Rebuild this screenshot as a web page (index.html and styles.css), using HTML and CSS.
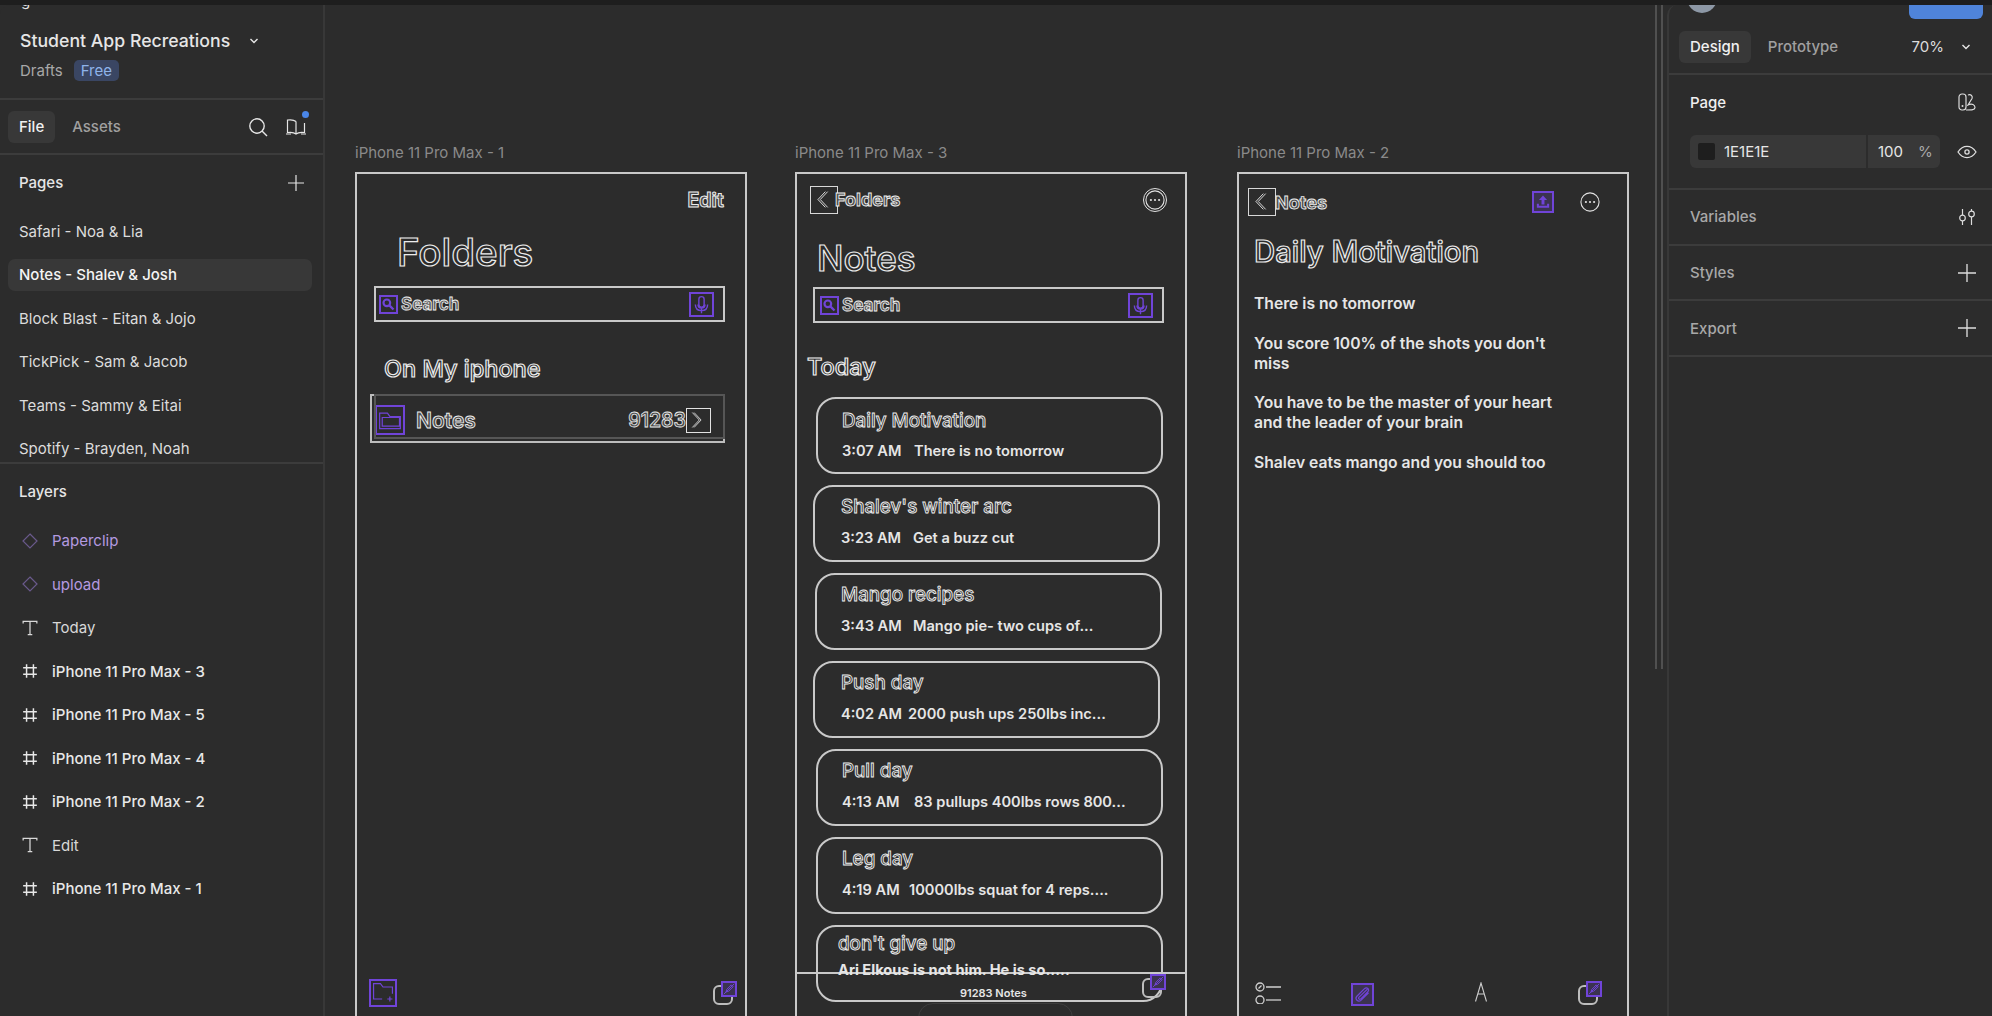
FILE: index.html
```html
<!DOCTYPE html>
<html lang="en">
<head>
  <meta charset="UTF-8" />
  <title>Student App Recreations</title>
  <link rel="stylesheet" href="styles.css">
</head>
<body>
  <svg class="sprite" xmlns="http://www.w3.org/2000/svg">
    <symbol id="i-hash" viewBox="0 0 14 14"><path d="M4 1v12M10 1v12M1 4.2h12M1 9.8h12" fill="none" stroke="currentColor" stroke-width="1.3"/></symbol>
    <symbol id="i-text" viewBox="0 0 14 14"><path d="M1 3V1.2h12V3M7 1.2v11.6M5 12.8h4" fill="none" stroke="currentColor" stroke-width="1.1"/></symbol>
    <symbol id="i-diamond" viewBox="0 0 16 16"><path d="M8 1l7 7-7 7-7-7z" fill="none" stroke="currentColor" stroke-width="1.2"/></symbol>
    <symbol id="i-plus" viewBox="0 0 16 16"><path d="M8 0v16M0 8h16" fill="none" stroke="currentColor" stroke-width="1.2"/></symbol>
    <symbol id="i-chev" viewBox="0 0 10 6"><path d="M1.5 1L5 4.5 8.5 1" fill="none" stroke="currentColor" stroke-width="1.4"/></symbol>
    <symbol id="i-search" viewBox="0 0 20 20"><circle cx="9" cy="9" r="7.2" fill="none" stroke="currentColor" stroke-width="1.4"/><path d="M14 14l5 5" stroke="currentColor" stroke-width="1.4"/></symbol>
    <symbol id="i-eye" viewBox="0 0 20 14"><path d="M1 7c2.5-3.8 5.5-5.6 9-5.6S16.500 3.200 19 7c-2.500 3.800-5.500 5.600-9 5.600S3.500 10.800 1 7z" fill="none" stroke="currentColor" stroke-width="1.300"/><circle cx="10" cy="7" r="2.100" fill="none" stroke="currentColor" stroke-width="1.300"/></symbol>
    <symbol id="i-mag" viewBox="0 0 18 18"><circle cx="7" cy="7" r="4" fill="none" stroke="currentColor" stroke-width="2.600"/><path d="M10 10l5 5" stroke="currentColor" stroke-width="2.800"/></symbol>
    <symbol id="i-mic" viewBox="0 0 24 24"><rect x="9" y="3" width="6" height="12" rx="3" fill="none" stroke="currentColor" stroke-width="1.600"/><path d="M5 12c0 4.500 3 7 7 7s7-2.500 7-7M12 15v7M8 12c0 3 2 4 4 4s4-1 4-4" fill="none" stroke="currentColor" stroke-width="1.600"/></symbol>
    <symbol id="i-back" viewBox="0 0 27 27"><path d="M18 5l-8 8.500 8 8.500M15.500 5l-8 8.500 8 8.500" fill="none" stroke="currentColor" stroke-width="1"/></symbol>
    <symbol id="i-more" viewBox="0 0 22 22"><circle cx="11" cy="11" r="10" fill="none" stroke="currentColor" stroke-width="1.200"/><circle cx="6.500" cy="11" r="1.200" fill="currentColor"/><circle cx="11" cy="11" r="1.200" fill="currentColor"/><circle cx="15.500" cy="11" r="1.200" fill="currentColor"/></symbol>
    <symbol id="i-pen" viewBox="0 0 16 16"><path d="M4 12l1-3.500L11 2.500 13.500 5 7.500 11zM1 15L15 1" fill="none" stroke="currentColor" stroke-width="1.300"/></symbol>
  </svg>

  <div class="topbar"></div>

  <div class="app">
    <aside class="panel panel-left">
      <span class="cut-logo">g</span>
      <div class="file-head">
        <div class="file-title">Student App Recreations <svg class="chev"><use href="#i-chev"/></svg></div>
        <div class="file-sub"><span>Drafts</span><span class="badge">Free</span></div>
      </div>
      <div class="tabs-row">
        <span class="tab tab-on">File</span>
        <span class="tab">Assets</span>
        <svg class="tab-search"><use href="#i-search"/></svg>
        <span class="book">
          <svg viewBox="0 0 22 18" width="22" height="18"><path d="M11 3.500C9 1.800 6 1.500 2.500 2v12.500c3.500-.5 6.500-.2 8.500 1.500 2-1.700 5-2 8.500-1.500V5M11 3.500V16M1 16h5M16 16h5" fill="none" stroke="currentColor" stroke-width="1.200"/></svg>
          <i class="dot"></i>
        </span>
      </div>
      <div class="pages">
        <div class="section-head"><span>Pages</span><svg class="plus"><use href="#i-plus"/></svg></div>
        <div class="page-row">Safari - Noa &amp; Lia</div>
        <div class="page-row page-on">Notes - Shalev &amp; Josh</div>
        <div class="page-row">Block Blast - Eitan &amp; Jojo</div>
        <div class="page-row">TickPick - Sam &amp; Jacob</div>
        <div class="page-row">Teams - Sammy &amp; Eitai</div>
        <div class="page-row">Spotify - Brayden, Noah</div>
      </div>
      <div class="layers">
        <div class="section-head section-layers"><span>Layers</span></div>
        <div class="layer comp"><svg><use href="#i-diamond"/></svg>Paperclip</div>
        <div class="layer comp"><svg><use href="#i-diamond"/></svg>upload</div>
        <div class="layer"><svg><use href="#i-text"/></svg>Today</div>
        <div class="layer layer-frame"><svg><use href="#i-hash"/></svg>iPhone 11 Pro Max - 3</div>
        <div class="layer layer-frame"><svg><use href="#i-hash"/></svg>iPhone 11 Pro Max - 5</div>
        <div class="layer layer-frame"><svg><use href="#i-hash"/></svg>iPhone 11 Pro Max - 4</div>
        <div class="layer layer-frame"><svg><use href="#i-hash"/></svg>iPhone 11 Pro Max - 2</div>
        <div class="layer"><svg><use href="#i-text"/></svg>Edit</div>
        <div class="layer layer-frame"><svg><use href="#i-hash"/></svg>iPhone 11 Pro Max - 1</div>
      </div>
    </aside>

    <main class="canvas">
      <div class="frame-label frame-one-pos">iPhone 11 Pro Max - 1</div>
      <section class="frame frame-one-pos">
        <div class="head head-one"><span class="edit">Edit</span></div>
        <h1 class="big folders-title">Folders</h1>
        <div class="search search-one">
          <svg class="pbox mag"><use href="#i-mag"/></svg>
          <span class="search-text">Search</span>
          <svg class="pbox mic"><use href="#i-mic"/></svg>
        </div>
        <h2 class="mid iphone-title">On My iphone</h2>
        <div class="folder-row">
          <span class="pbox folder-box">
            <svg viewBox="0 0 30 29" width="26" height="25"><path d="M3 24V6h9l3 4h12v14zM6 21V11h20v10z" fill="none" stroke="currentColor" stroke-width="1.400"/></svg>
          </span>
          <span class="folder-name">Notes</span>
          <span class="folder-count">91283</span>
          <span class="chev-box"><svg viewBox="0 0 25 25" width="22" height="22"><path d="M8 4l8 8.500-8 8.500M6 4l8 8.500-8 8.500" fill="none" stroke="currentColor" stroke-width="1"/></svg></span>
        </div>
        <div class="bar bar-one">
          <span class="pbox newfolder">
            <svg viewBox="0 0 28 28" width="24" height="24"><path d="M13 21H3V3h8l3 4h11v8M19 21h6M22 18v6" fill="none" stroke="currentColor" stroke-width="1.400"/></svg>
          </span>
          <span class="compose"><svg class="pbox pen"><use href="#i-pen"/></svg></span>
        </div>
      </section>

      <div class="frame-label frame-two-pos">iPhone 11 Pro Max - 3</div>
      <section class="frame frame-two-pos">
        <div class="head head-two">
          <span class="back"><svg><use href="#i-back"/></svg></span>
          <span class="back-label folders-back">Folders</span>
          <span class="more more-double"><svg><use href="#i-more"/></svg></span>
        </div>
        <h1 class="big notes-title">Notes</h1>
        <div class="search search-two">
          <svg class="pbox mag"><use href="#i-mag"/></svg>
          <span class="search-text">Search</span>
          <svg class="pbox mic"><use href="#i-mic"/></svg>
        </div>
        <h2 class="mid today-title">Today</h2>
        <div class="cards">
          <div class="card card-first"><div class="card-title">Daily Motivation</div><div class="card-sub"><span class="time">3:07 AM</span><span>There is no tomorrow</span></div></div>
          <div class="card card-left"><div class="card-title">Shalev's winter arc</div><div class="card-sub"><span class="time">3:23 AM</span><span>Get a buzz cut</span></div></div>
          <div class="card card-mid"><div class="card-title">Mango recipes</div><div class="card-sub"><span class="time">3:43 AM</span><span>Mango pie- two cups of...</span></div></div>
          <div class="card card-left"><div class="card-title">Push day</div><div class="card-sub card-tight"><span class="time">4:02 AM</span><span>2000 push ups 250lbs inc...</span></div></div>
          <div class="card"><div class="card-title">Pull day</div><div class="card-sub"><span class="time">4:13 AM</span><span>83 pullups 400lbs rows 800...</span></div></div>
          <div class="card"><div class="card-title">Leg day</div><div class="card-sub card-tight"><span class="time">4:19 AM</span><span>10000lbs squat for 4 reps....</span></div></div>
          <div class="card card-last"><div class="card-title">don't give up</div><div class="card-sub"><span>Ari Elkous is not him. He is so.....</span></div></div>
        </div>
        <div class="nav-line"></div>
        <div class="nav-count">91283 Notes</div>
        <span class="compose compose-two"><svg class="pbox pen"><use href="#i-pen"/></svg></span>
        <div class="home-arc"></div>
      </section>

      <div class="frame-label frame-three-pos">iPhone 11 Pro Max - 2</div>
      <section class="frame frame-three-pos">
        <div class="head head-three">
          <span class="back"><svg><use href="#i-back"/></svg></span>
          <span class="back-label notes-back">Notes</span>
          <span class="pbox upload">
            <svg viewBox="0 0 22 22" width="18" height="18"><path d="M11 3l-5 5.500h3.200V14h3.600V8.500H16zM3.500 13v5h15v-5h-2.500v2.500H6V13z" fill="currentColor"/></svg>
          </span>
          <span class="more"><svg><use href="#i-more"/></svg></span>
        </div>
        <h1 class="daily-title">Daily Motivation</h1>
        <div class="note-body">
          <p>There is no tomorrow</p>
          <p>You score 100% of the shots you don't miss</p>
          <p>You have to be the master of your heart and the leader of your brain</p>
          <p>Shalev eats mango and you should too</p>
        </div>
        <div class="bar bar-three">
          <svg class="checklist" viewBox="0 0 28 22" width="28" height="22"><circle cx="5" cy="5" r="4" fill="none" stroke="currentColor" stroke-width="1.300"/><path d="M3.500 6.500L6.500 3.500M11 5h15" stroke="currentColor" stroke-width="1.300"/><circle cx="5" cy="18" r="4" fill="none" stroke="currentColor" stroke-width="1.300"/><path d="M11 18h15" stroke="currentColor" stroke-width="1.300"/></svg>
          <span class="pbox clip">
            <svg viewBox="0 0 22 22" width="19" height="19"><path d="M17 4.500L7 14c-1.500 1.500 .5 3.500 2 2l8-8c3-3-1-6.500-4-3.500L4.500 13c-3 3.500 1.500 7.500 5 4.500L18 9" fill="none" stroke="currentColor" stroke-width="1.400"/></svg>
          </span>
          <svg class="letter" viewBox="0 0 12 20" width="12" height="20"><path d="M.5 19.500L6 1l5.500 18.500M3 12h6" fill="none" stroke="currentColor" stroke-width="1.100"/></svg>
          <span class="compose"><svg class="pbox pen"><use href="#i-pen"/></svg></span>
        </div>
      </section>

      <div class="scroll-track"></div>
    </main>

    <aside class="panel panel-right">
      <div class="user-strip"><i class="avatar"></i><i class="share"></i></div>
      <div class="design-tabs">
        <span class="tab tab-on">Design</span>
        <span class="tab">Prototype</span>
        <span class="zoom-val">70%</span>
        <svg class="chev"><use href="#i-chev"/></svg>
      </div>
      <div class="prop prop-page">
        <div class="prop-head">
          <strong>Page</strong>
          <svg class="pic" viewBox="0 0 18 18"><rect x="1" y="1" width="7" height="16" rx="3" fill="none" stroke="currentColor" stroke-width="1.200"/><circle cx="4.500" cy="13" r="1" fill="currentColor"/><path d="M10 2c3-1 5 1 4 3.500L10 12c4-2 7 0 7 2.500S14 17 8 17" fill="none" stroke="currentColor" stroke-width="1.200"/></svg>
        </div>
        <div class="fill-row">
          <div class="fill-input">
            <i class="swatch"></i><span class="hex">1E1E1E</span>
            <span class="opacity">100</span><span class="percent">%</span>
          </div>
          <svg class="pic eye"><use href="#i-eye"/></svg>
        </div>
      </div>
      <div class="prop prop-line">
        <span>Variables</span>
        <svg class="pic" viewBox="0 0 18 18"><path d="M4.500 1v6M4.500 13v4M13.500 1v2M13.500 9v8" stroke="currentColor" stroke-width="1.200"/><circle cx="4.500" cy="10" r="2.800" fill="none" stroke="currentColor" stroke-width="1.200"/><circle cx="13.500" cy="6" r="2.800" fill="none" stroke="currentColor" stroke-width="1.200"/></svg>
      </div>
      <div class="prop prop-line"><span>Styles</span><svg class="pic"><use href="#i-plus"/></svg></div>
      <div class="prop prop-line"><span>Export</span><svg class="pic"><use href="#i-plus"/></svg></div>
    </aside>
  </div>
</body>
</html>
```

FILE: styles.css
```css
* {
  box-sizing: border-box;
}

html,
body {
  margin: 0;
  height: 1016px;
  overflow: hidden;
}

body {
  display: flex;
  flex-direction: column;
  background-color: #2c2c2c;
  color: #e6e6e6;
  font-family: Inter, "Noto Sans", sans-serif;
  font-size: 15px;
}

.sprite {
  display: none;
}

.topbar {
  height: 5px;
  flex: none;
  background-color: #1e1e1e;
}

.app {
  flex: 1;
  display: flex;
  min-height: 0;
}

.panel {
  flex: none;
  background-color: #2c2c2c;
  overflow: hidden;
}

/* left panel */
.panel-left {
  width: 325px;
  border-right: 2px solid #383838;
  position: relative;
  border-top-left-radius: 10px;
}

.cut-logo {
  position: absolute;
  left: 21px;
  top: -14px;
}

.file-head {
  height: 95px;
  padding: 23px 0 0 20px;
  border-bottom: 2px solid #3c3c3c;
}

.file-title {
  display: flex;
  align-items: center;
  font-size: 17.700px;
  font-weight: 500;
  line-height: 26px;
}

.chev {
  width: 10px;
  height: 6px;
  margin-left: 19px;
}

.file-sub {
  display: flex;
  align-items: center;
  gap: 11px;
  margin-top: 6px;
  color: #a8a8a8;
}

.badge {
  padding: 2px 7px;
  border-radius: 5px;
  background-color: #3a4663;
  color: #8fb4ea;
  line-height: 17px;
}

.tabs-row {
  height: 55px;
  display: flex;
  align-items: center;
  padding: 0 8px;
  border-bottom: 2px solid #3c3c3c;
}

.tab {
  height: 32px;
  padding: 0 11px;
  display: flex;
  align-items: center;
  border-radius: 6px;
  color: #a0a0a0;
  font-weight: 500;
}

.tab + .tab {
  margin-left: 6px;
}

.tab-on {
  background-color: #383838;
  color: #f0f0f0;
}

.tab-search {
  width: 20px;
  height: 20px;
  margin-left: auto;
}

.book {
  position: relative;
  margin: 0 8px 0 17px;
  height: 18px;
}

.dot {
  position: absolute;
  right: -2px;
  top: -7px;
  width: 7px;
  height: 7px;
  border-radius: 50%;
  background-color: #4a86e8;
}

.pages {
  height: 309px;
  border-bottom: 2px solid #3c3c3c;
  overflow: hidden;
}

.section-head {
  height: 55px;
  display: flex;
  align-items: center;
  justify-content: space-between;
  padding: 0 19px;
  font-weight: 500;
}

.pages .section-head {
  margin-bottom: 5px;
}

.plus {
  width: 16px;
  height: 16px;
}

.page-row {
  height: 32px;
  margin: 0 11px 11.500px 8px;
  padding-left: 11px;
  display: flex;
  align-items: center;
  border-radius: 7px;
  color: #dcdcdc;
}

.page-on {
  background-color: #383838;
  color: #f4f4f4;
  font-weight: 500;
}

.layer {
  height: 43.500px;
  display: flex;
  align-items: center;
  padding-left: 22px;
  color: #d8d8d8;
}

.layer svg {
  width: 16px;
  height: 16px;
  margin-right: 14px;
  flex: none;
}

.comp {
  color: #b49ae0;
}

.comp svg {
  color: #6a5a8c;
}

.layer-frame {
  color: #e8e8e8;
  font-weight: 500;
}

/* canvas */
.canvas {
  flex: 1;
  position: relative;
  overflow: hidden;
}

.frame-label {
  position: absolute;
  top: 139px;
  color: #8a8a8a;
  line-height: 18px;
}

.frame {
  position: absolute;
  top: 167px;
  width: 392px;
  height: 852px;
  border: 2px solid #c9c9c9;
}

.frame-one-pos {
  left: 30px;
}

.frame-two-pos {
  left: 470px;
}

.frame-three-pos {
  left: 912px;
}

.scroll-track {
  position: absolute;
  left: 1330px;
  top: 0;
  width: 8px;
  height: 664px;
  border-left: 2px solid #505050;
  border-right: 2px solid #505050;
}

.head {
  display: flex;
  align-items: center;
}

.head-one {
  justify-content: flex-end;
  height: 24px;
  margin-top: 14px;
  padding-right: 21px;
}

.edit {
  font-size: 19.500px;
  font-weight: 700;
  color: #4a4a4a;
  -webkit-text-stroke: 1px #ececec;
}

.big,
.mid,
.daily-title {
  margin: 0;
  font-weight: 500;
  color: #2c2c2c;
  -webkit-text-stroke: 1.200px #ececec;
}

.big {
  line-height: 46px;
}

.folders-title {
  margin: 17px 0 0 40px;
  font-size: 38.500px;
}

.notes-title {
  margin: 24px 0 0 20px;
  font-size: 35px;
  line-height: 42px;
}

.mid {
  font-size: 23.500px;
  line-height: 30px;
}

.iphone-title {
  margin: 32px 0 0 27px;
}

.today-title {
  margin: 29px 0 0 10px;
}

.search {
  width: 351px;
  height: 36px;
  display: flex;
  align-items: center;
  border: 2px solid #c9c9c9;
}

.search-one {
  margin: 11px 0 0 17px;
}

.search-two {
  margin: 8px 0 0 16px;
}

.pbox {
  flex: none;
  border: 2px solid #7044d8;
  color: #7044d8;
}

.mag {
  width: 19px;
  height: 19px;
  margin-left: 3px;
}

.search-two .mag {
  margin-left: 5px;
}

.search-text {
  margin-left: 3px;
  font-size: 17px;
  font-weight: 700;
  color: #5a5a5a;
  -webkit-text-stroke: 0.800px #f0f0f0;
}

.mic {
  width: 25px;
  height: 25px;
  margin-left: auto;
  margin-right: 9px;
}

.folder-row {
  position: relative;
  width: 355px;
  height: 49px;
  margin: 10px 0 0 13px;
  padding-top: 3px;
  display: flex;
  align-items: center;
  border: 2px solid #bdbdbd;
}

/* the darker copy of the row sits over the white one */
.folder-row::before {
  content: "";
  position: absolute;
  left: 2px;
  right: -2px;
  top: -2px;
  bottom: 2px;
  border: 2px solid #565656;
}

.folder-box {
  width: 30px;
  height: 30px;
  margin-left: 3px;
  display: flex;
  align-items: center;
  justify-content: center;
}

.folder-name {
  margin-left: 11px;
  font-size: 21px;
  font-weight: 600;
  color: #4a4a4a;
  -webkit-text-stroke: 0.900px #ececec;
}

.folder-count {
  margin-left: auto;
  font-size: 19.500px;
  font-weight: 600;
  color: #4a4a4a;
  -webkit-text-stroke: 0.800px #ececec;
}

.chev-box {
  width: 25px;
  height: 25px;
  margin-right: 12px;
  border: 1.500px solid #e2e2e2;
  color: #e2e2e2;
}

.bar {
  position: absolute;
  left: 0;
  right: 0;
  top: 805px;
  height: 28px;
  display: flex;
  align-items: center;
}

.bar-one {
  justify-content: space-between;
  padding: 0 12px;
}

.newfolder {
  width: 28px;
  height: 28px;
}

.compose {
  position: relative;
  display: block;
  width: 20px;
  height: 20px;
  margin-top: 4px;
  border: 2px solid #bdbdbd;
  border-radius: 6px;
}

.pen {
  position: absolute;
  left: 6px;
  top: -6px;
  width: 16px;
  height: 16px;
  background-color: #3b3350;
}

.head-two {
  height: 27px;
  margin-top: 12px;
  padding: 0 20px 0 13px;
}

.back {
  flex: none;
  width: 28px;
  height: 28px;
  border: 1.500px solid #d8d8d8;
  color: #e6e6e6;
}

.back svg {
  display: block;
  width: 25px;
  height: 25px;
}

.back-label {
  font-weight: 700;
  color: #4a4a4a;
  -webkit-text-stroke: 0.900px #ececec;
}

.folders-back {
  margin-left: -3px;
  font-size: 18px;
}

.notes-back {
  margin-left: -1px;
  font-size: 18px;
}

.more {
  margin-left: auto;
  width: 20px;
  height: 20px;
  color: #e2e2e2;
}

.more svg {
  display: block;
  width: 100%;
  height: 100%;
}

.more-double {
  border-radius: 50%;
  outline: 1px solid #e2e2e2;
  outline-offset: 1px;
}

.cards {
  display: flex;
  flex-direction: column;
  gap: 11px;
  margin: 15px 0 0 19px;
}

.card {
  width: 347px;
  height: 77px;
  padding: 8px 0 0 24px;
  border: 2px solid #c9c9c9;
  border-radius: 20px;
}

.card-first {
  padding-top: 10px;
}

.card-left {
  margin-left: -3px;
  padding-left: 26px;
}

.card-mid {
  margin-left: -1px;
  padding-left: 24px;
}

.card-title {
  font-size: 18.800px;
  line-height: 24px;
  font-weight: 500;
  color: #2c2c2c;
  -webkit-text-stroke: 0.900px #ececec;
}

.card-sub {
  display: flex;
  margin-top: 9px;
  font-size: 14.600px;
  line-height: 20px;
  font-weight: 600;
  color: #e6e6e6;
  white-space: nowrap;
}

.card-first .card-sub {
  margin-top: 8px;
}

.time {
  width: 72px;
  flex: none;
}

.card-tight .time {
  width: 67px;
}

.card-last {
  padding: 5px 0 0 20px;
}

/* this text is drawn on top of the nav bar line */
.card-last .card-sub {
  position: relative;
  z-index: 1;
  margin-top: 4px;
  font-weight: 700;
}

.nav-line {
  position: absolute;
  left: 0;
  right: 0;
  top: 798px;
  height: 2px;
  background-color: #c9c9c9;
}

.nav-count {
  position: absolute;
  left: 163px;
  top: 812px;
  font-size: 11px;
  font-weight: 600;
  line-height: 14px;
}

.compose-two {
  position: absolute;
  left: 345px;
  top: 804px;
  margin: 0;
}

.home-arc {
  position: absolute;
  left: 121px;
  top: 829px;
  width: 155px;
  height: 30px;
  border: 1px solid #3e3e3e;
  border-radius: 26px;
}

.head-three {
  height: 28px;
  margin-top: 14px;
  padding: 0 27px 0 9px;
}

.upload {
  width: 22px;
  height: 22px;
  margin-left: auto;
  margin-right: 26px;
  display: flex;
  align-items: center;
  justify-content: center;
  background-color: #3b3350;
}

.head-three .more {
  margin-left: 0;
}

.daily-title {
  margin: 18px 0 0 15px;
  font-size: 29.300px;
  line-height: 36px;
}

.note-body {
  width: 310px;
  margin: 24px 0 0 15px;
  font-size: 15.700px;
  line-height: 20px;
  font-weight: 600;
  color: #e6e6e6;
}

.note-body p {
  margin: 0 0 19.500px;
}

.bar-three {
  padding-left: 16px;
  color: #cfcfcf;
}

.clip {
  width: 23px;
  height: 23px;
  margin: 2px 0 0 68px;
  background-color: #3b3350;
}

.letter {
  margin: 0 0 3px 101px;
}

.bar-three .compose {
  margin-left: 91px;
}

/* right panel */
.panel-right {
  width: 325px;
  border-left: 2px solid #383838;
  border-top-left-radius: 10px;
}

.user-strip {
  height: 15px;
  position: relative;
}

.avatar {
  position: absolute;
  left: 18px;
  top: -22px;
  width: 30px;
  height: 30px;
  border-radius: 50%;
  background-color: #8d98a6;
}

.share {
  position: absolute;
  left: 240px;
  top: -10px;
  width: 74px;
  height: 24px;
  border-radius: 6px;
  background-color: #4f84da;
}

.design-tabs {
  height: 55px;
  display: flex;
  align-items: center;
  padding: 0 21px 0 10px;
  border-bottom: 2px solid #3c3c3c;
}

.zoom-val {
  margin-left: auto;
  margin-right: 17px;
  color: #dcdcdc;
}

.design-tabs .chev {
  margin-left: 0;
}

.prop {
  padding: 0 16px 0 21px;
  border-bottom: 2px solid #3c3c3c;
}

.prop-page {
  height: 115px;
  padding-top: 17px;
}

.prop-head {
  display: flex;
  align-items: center;
  justify-content: space-between;
  height: 20px;
}

.prop-head strong {
  font-weight: 500;
  color: #f0f0f0;
}

.pic {
  width: 18px;
  height: 18px;
  flex: none;
  color: #dcdcdc;
}

.fill-row {
  display: flex;
  align-items: center;
  justify-content: space-between;
  margin-top: 23px;
}

.fill-input {
  width: 250px;
  height: 33px;
  display: flex;
  align-items: center;
  border-radius: 6px;
  background-color: #383838;
}

.swatch {
  width: 17px;
  height: 17px;
  margin-left: 8px;
  border-radius: 2px;
  background-color: #1e1e1e;
}

.hex {
  width: 153px;
  height: 100%;
  display: flex;
  align-items: center;
  padding-left: 9px;
  border-right: 2px solid #2c2c2c;
}

.opacity {
  margin-left: 10px;
}

.percent {
  margin-left: 15px;
  color: #a8a8a8;
}

.eye {
  width: 20px;
  height: 14px;
  margin-right: -1px;
}

.prop-line {
  height: 55.700px;
  display: flex;
  align-items: center;
  justify-content: space-between;
  color: #a8a8a8;
  font-weight: 500;
}
```
